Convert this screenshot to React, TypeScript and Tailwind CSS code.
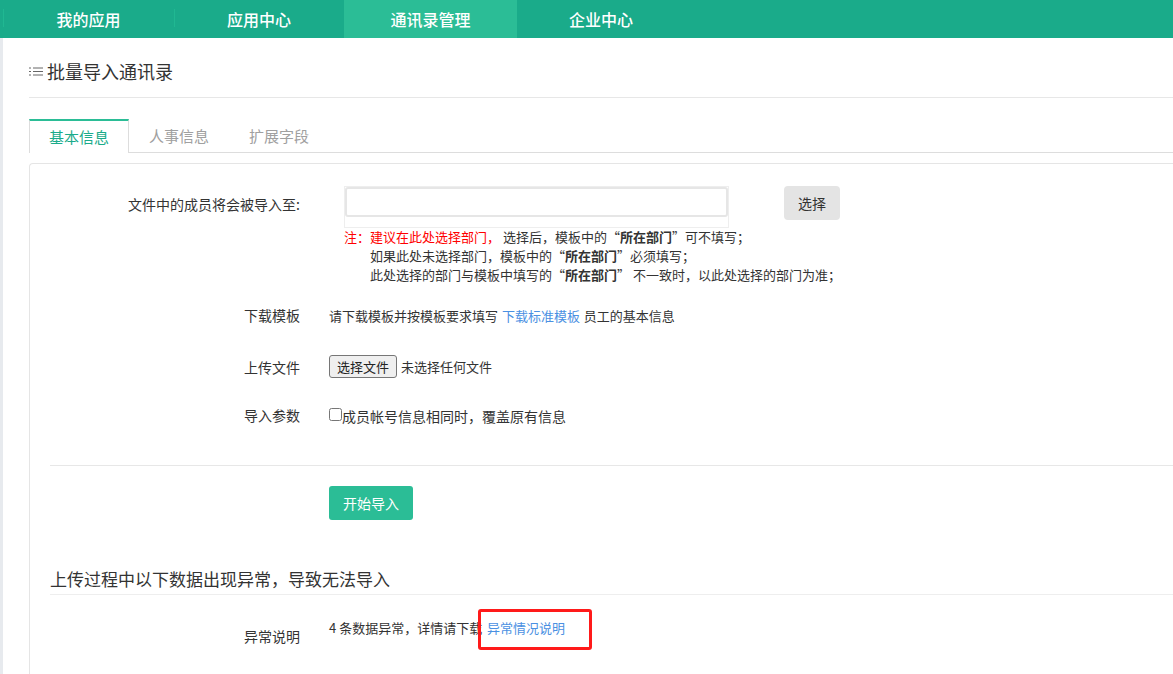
import type { ReactNode } from "react";

const navItems = [
  { label: "我的应用", width: "w-[171px]" },
  { label: "应用中心", width: "w-[170px]" },
  { label: "通讯录管理", width: "w-[173px] bg-[#2bbd96]" },
  { label: "企业中心", width: "w-[168px]" },
];

function FormRow({ label, className, labelClass, children }: { label: string; className?: string; labelClass?: string; children: ReactNode }) {
  return (
    <div className={`flex ${className ?? ""}`}>
      <label className={`w-[250px] shrink-0 text-right text-sm leading-5 text-[#333] ${labelClass ?? ""}`}>{label}</label>
      <div className="ml-[29px] min-w-0 flex-1 text-[13px] leading-5 text-[#333]">{children}</div>
    </div>
  );
}

export default function App() {
  return (
    <div className="h-[674px] w-[1173px] overflow-hidden bg-white font-['Noto_Sans_CJK_SC','Liberation_Sans',sans-serif] text-[#333]">
      {/* Top nav */}
      <nav className="flex h-[38px] bg-[#1aab8a] pl-[3px] text-white">
        {navItems.map((item, i) => (
          <a key={item.label} className={`relative flex h-full items-center justify-center text-base font-medium ${item.width}`}>
            {i < 2 && <span className="absolute top-[9px] left-0 h-[18px] w-px bg-[#20b892]" />}
            {item.label}
          </a>
        ))}
      </nav>

      <div className="flex h-[636px]">
        <div className="w-[3px] shrink-0 bg-[#e7eaee]" />
        <main className="min-w-0 flex-1 pl-[26px]">
          {/* Page title */}
          <div className="flex h-[60px] items-center gap-1 border-b border-[#e7e7e7] pt-[7px]">
            <svg width="14" height="9" viewBox="0 0 14 9" className="text-[#666]">
              <path d="M0 1h2M4 1h10M0 4.500h2M4 4.500h10M0 8h2M4 8h10" stroke="currentColor" strokeWidth="1" fill="none" />
            </svg>
            <h1 className="text-lg leading-7 font-normal text-[#333]">批量导入通讯录</h1>
          </div>

          {/* Tabs */}
          <div className="mt-[21px] flex h-[34px] border-b border-[#ddd] text-[15px]">
            <div className="z-10 flex h-[34px] w-[100px] items-center justify-center border-x border-t-2 border-x-[#ddd] border-t-[#2bbd96] bg-white text-[#1aab8a]">
              基本信息
            </div>
            <div className="flex w-[100px] items-center justify-center pt-[2px] text-[#a0a0a0]">人事信息</div>
            <div className="flex w-[100px] items-center justify-center pt-[2px] text-[#a0a0a0]">扩展字段</div>
          </div>

          {/* Panel */}
          <section className="mt-[10px] h-[520px] rounded-tl border-t border-l border-[#e5e5e5] pt-[22px] pl-[20px]">
            <FormRow label="文件中的成员将会被导入至:" labelClass="pt-[8px]">
              <div className="flex items-start pl-[15px]">
                <div className="h-[42px] w-[385px] border border-[#eee]">
                  <input className="block h-[30px] w-full rounded-[3px] border-2 border-[#e6e6e6] bg-white" />
                </div>
                <button className="ml-[55px] h-[34px] w-14 rounded bg-[#e4e4e4] text-sm text-[#333]">选择</button>
              </div>
              <div className="-mt-[1px] pl-[15px] text-[13px] leading-[19px]">
                <p>
                  <span className="text-[#f00]">注：建议在此处选择部门，</span> 选择后，模板中的“<b>所在部门</b>”可不填写；
                </p>
                <p className="pl-[26px]">
                  如果此处未选择部门，模板中的“<b>所在部门</b>”必须填写；
                </p>
                <p className="pl-[26px] whitespace-nowrap">
                  此处选择的部门与模板中填写的“<b>所在部门</b>” 不一致时，以此处选择的部门为准；
                </p>
              </div>
            </FormRow>

            <FormRow label="下载模板" className="mt-[22px]" labelClass="-mt-px">
              请下载模板并按模板要求填写 <a className="mx-px text-[#4a90e2]">下载标准模板</a> 员工的基本信息
            </FormRow>

            <FormRow label="上传文件" className="mt-[29px] items-center">
              <div className="flex items-center gap-1">
                <button className="h-[23px] w-[68px] rounded-[3px] border border-[#767676] bg-[#efefef] text-[13px] text-[#222]">选择文件</button>
                <span>未选择任何文件</span>
              </div>
            </FormRow>

            <FormRow label="导入参数" className="mt-[27px]">
              <div className="mt-px flex items-center">
                <input type="checkbox" className="m-0 -mt-[3px] h-[13px] w-[13px]" />
                <span className="text-sm">成员帐号信息相同时，覆盖原有信息</span>
              </div>
            </FormRow>

            <div className="mt-[39px] border-t border-[#e7e7e7]" />

            <div className="mt-[20px] pl-[279px]">
              <button className="h-[34px] w-[84px] rounded-[3px] bg-[#2bbd96] text-sm text-white">开始导入</button>
            </div>

            <h2 className="mt-[45px] border-b border-[#eee] pb-px text-[17px] leading-[28px] font-normal text-[#333]">
              上传过程中以下数据出现异常，导致无法导入
            </h2>

            <FormRow label="异常说明" className="mt-[31px]">
              <div className="relative -mt-[8px] w-fit whitespace-nowrap">
                4 条数据异常，详情请下载 <a className="ml-[2px] text-[#4a90e2]">异常情况说明</a>
                {/* red annotation drawn over the screenshot */}
                <span className="absolute top-[-9px] left-[149px] h-[41px] w-[114px] rounded-[3px] border-[3px] border-[#ff1a1a]" />
              </div>
            </FormRow>
          </section>
        </main>
      </div>
    </div>
  );
}
